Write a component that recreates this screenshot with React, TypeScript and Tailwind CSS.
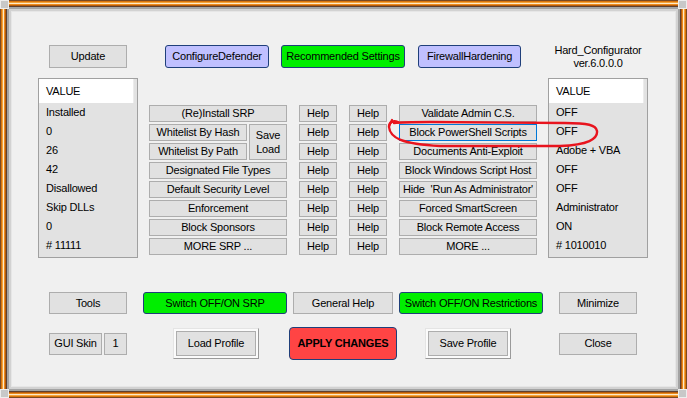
import React from "react";

const frameLayers = [
  "h-full border border-[#7b4a22]",
  "h-full border border-[#d9730a]",
  "h-full border border-[#f5a43a]",
  "h-full border border-[#fde9c9]",
  "h-full border border-[#ec8a1c]",
  "h-full border border-[#b35a0c]",
  "h-full border border-[#5e4030]",
  "h-full border-2 border-[#a3a3a3]",
  "h-full border-2 border-[#d2d2d2]",
  "h-full border border-[#e6e6e6]",
];

function Btn({ className = "", children }: { className?: string; children: React.ReactNode }) {
  return (
    <div
      className={
        "flex items-center justify-center text-center leading-none whitespace-pre border " +
        className
      }
    >
      {children}
    </div>
  );
}

const gray = "bg-[#e1e1e1] border-[#adadad]";
const lav = "bg-[#c0c0ff] border-[#1f3f7a] rounded-[3px]";
const green = "bg-[#00ee00] border-[#1f3f7a] rounded-[3px]";

function ListBox({ items }: { items: string[] }) {
  return (
    <div className="w-[100px] h-[180px] border border-[#a0a0a0] bg-[#e2e2e2] shrink-0">
      <div className="h-[24px] bg-white mr-[3px] border-r border-[#ececec] flex items-center pl-[7px]">
        VALUE
      </div>
      {items.map((t, i) => (
        <div key={i} className="h-[19px] flex items-center pl-[7px] whitespace-nowrap">
          {t}
        </div>
      ))}
    </div>
  );
}

function Raised({ className = "", children }: { className?: string; children: React.ReactNode }) {
  return (
    <div
      className={
        "p-[2px] bg-[#fbfbfb] border border-t-[#e4e4e4] border-l-[#e4e4e4] border-r-[#9a9a9a] border-b-[#9a9a9a] " +
        className
      }
    >
      <div className="h-full flex items-center justify-center bg-[#e1e1e1] border border-[#adadad] leading-none">
        {children}
      </div>
    </div>
  );
}

export default function App() {
  const left = ["Installed", "0", "26", "42", "Disallowed", "Skip DLLs", "0", "# 11111"];
  const right = ["OFF", "OFF", "Adobe + VBA", "OFF", "OFF", "Administrator", "ON", "# 1010010"];
  const rightBtns = [
    "Validate Admin C.S.",
    "Block PowerShell Scripts",
    "Documents Anti-Exploit",
    "Block Windows Script Host",
    "Hide  'Run As Administrator'",
    "Forced SmartScreen",
    "Block Remote Access",
    "MORE ...",
  ];
  const leftBtns = ["Designated File Types", "Default Security Level", "Enforcement", "Block Sponsors", "MORE SRP ..."];

  let content = (
    <div className="h-full bg-[#f0f0f0] flex flex-col">
      {/* Row A */}
      <div className="flex items-start h-[23px] mt-[33px]">
        <Btn className={"ml-[37px] w-[78px] h-[23px] " + gray}>Update</Btn>
        <Btn className={"ml-[38px] w-[104px] h-[23px] " + lav}>ConfigureDefender</Btn>
        <Btn className={"ml-[12px] w-[124px] h-[23px] " + green}>Recommended Settings</Btn>
        <Btn className={"ml-[13px] w-[103px] h-[23px] " + lav}>FirewallHardening</Btn>
        <div className="ml-[27px] w-[100px] h-[23px] text-center leading-[13px] -mt-[1px]">
          <div>Hard_Configurator</div>
          <div>ver.6.0.0.0</div>
        </div>
      </div>

      {/* Middle */}
      <div className="flex items-start mt-[10px]">
        <div className="ml-[26px]">
          <ListBox items={left} />
        </div>
        <div className="flex gap-x-[12px] mt-[27px] ml-[11px]">
          <div className="w-[138px] flex flex-col gap-y-[2px]">
            <Btn className={"h-[17px] " + gray}>(Re)Install SRP</Btn>
            <div className="flex gap-x-[2px]">
              <div className="w-[98px] flex flex-col gap-y-[2px]">
                <Btn className={"h-[17px] " + gray}>Whitelist By Hash</Btn>
                <Btn className={"h-[17px] " + gray}>Whitelist By Path</Btn>
              </div>
              <div className={"w-[38px] h-[36px] border flex flex-col items-center justify-center leading-[14px] " + gray}>
                <div>Save</div>
                <div>Load</div>
              </div>
            </div>
            {leftBtns.map((t) => (
              <Btn key={t} className={"h-[17px] " + gray}>
                {t}
              </Btn>
            ))}
          </div>
          <div className="w-[38px] flex flex-col gap-y-[2px]">
            {Array.from({ length: 8 }).map((_, i) => (
              <Btn key={i} className={"h-[17px] " + gray}>
                Help
              </Btn>
            ))}
          </div>
          <div className="w-[38px] flex flex-col gap-y-[2px]">
            {Array.from({ length: 8 }).map((_, i) => (
              <Btn key={i} className={"h-[17px] " + gray}>
                Help
              </Btn>
            ))}
          </div>
          <div className="w-[138px] flex flex-col gap-y-[2px]">
            {rightBtns.map((t, i) => (
              <Btn
                key={i}
                className={
                  "h-[17px] " +
                  (i === 1 ? "bg-[#e1e1e1] border-[#0078d7]" : gray)
                }
              >
                {t}
              </Btn>
            ))}
          </div>
        </div>
        <div className="ml-[11px]">
          <ListBox items={right} />
        </div>
      </div>

      {/* Row B */}
      <div className="flex items-start mt-[34px]">
        <Btn className={"ml-[37px] w-[78px] h-[22px] " + gray}>Tools</Btn>
        <Btn className={"ml-[16px] w-[144px] h-[22px] " + green}>Switch OFF/ON SRP</Btn>
        <Btn className={"ml-[6px] w-[100px] h-[22px] " + gray}>General Help</Btn>
        <Btn className={"ml-[6px] w-[144px] h-[22px] " + green}>Switch OFF/ON Restrictions</Btn>
        <Btn className={"ml-[16px] w-[78px] h-[22px] " + gray}>Minimize</Btn>
      </div>

      {/* Row C */}
      <div className="flex items-center h-[33px] mt-[13px]">
        <Btn className={"ml-[37px] w-[53px] h-[22px] " + gray}>GUI Skin</Btn>
        <Btn className={"ml-[2px] w-[23px] h-[22px] " + gray}>1</Btn>
        <Raised className="ml-[46px] w-[86px] h-[31px]">Load Profile</Raised>
        <Btn className="ml-[30px] w-[108px] h-[33px] bg-[#ff4444] border-[#1f3f7a] rounded-[4px] font-bold">
          APPLY CHANGES
        </Btn>
        <Raised className="ml-[28px] w-[86px] h-[31px]">Save Profile</Raised>
        <Btn className={"ml-[48px] w-[78px] h-[22px] " + gray}>Close</Btn>
      </div>
    </div>
  );

  for (let i = frameLayers.length - 1; i >= 0; i--) {
    content = <div className={frameLayers[i]}>{content}</div>;
  }

  return (
    <div className="relative w-[687px] h-[398px] overflow-hidden font-['Liberation_Sans',Arial,sans-serif] text-[11px] tracking-[-0.2px] text-black bg-[#f0f0f0]">
      {content}
      {/* corner joints */}
      <div className="absolute left-0 top-0 w-[9px] h-[9px] bg-[#c8c8c8] border border-[#eeeeee]" />
      <div className="absolute right-0 top-0 w-[9px] h-[9px] bg-[#c8c8c8] border border-[#eeeeee]" />
      <div className="absolute left-0 bottom-0 w-[9px] h-[9px] bg-[#c8c8c8] border border-[#eeeeee]" />
      <div className="absolute right-0 bottom-0 w-[9px] h-[9px] bg-[#c8c8c8] border border-[#eeeeee]" />
      {/* red annotation */}
      <svg className="absolute left-0 top-0 pointer-events-none" width="687" height="398" viewBox="0 0 687 398">
        <path
          d="M 398 122 C 393 120, 389 122, 389 127 C 390 138, 402 144, 440 146 L 560 146 C 588 145, 598 139, 597 131 C 596 125, 588 123, 565 123 L 430 122 C 412 122, 402 122, 394 123"
          fill="none"
          stroke="#e8141e"
          strokeWidth="2.4"
          strokeLinecap="round"
        />
        <path d="M 389 126 L 392 120" fill="none" stroke="#e8141e" strokeWidth="2.2" strokeLinecap="round" />
      </svg>
    </div>
  );
}
